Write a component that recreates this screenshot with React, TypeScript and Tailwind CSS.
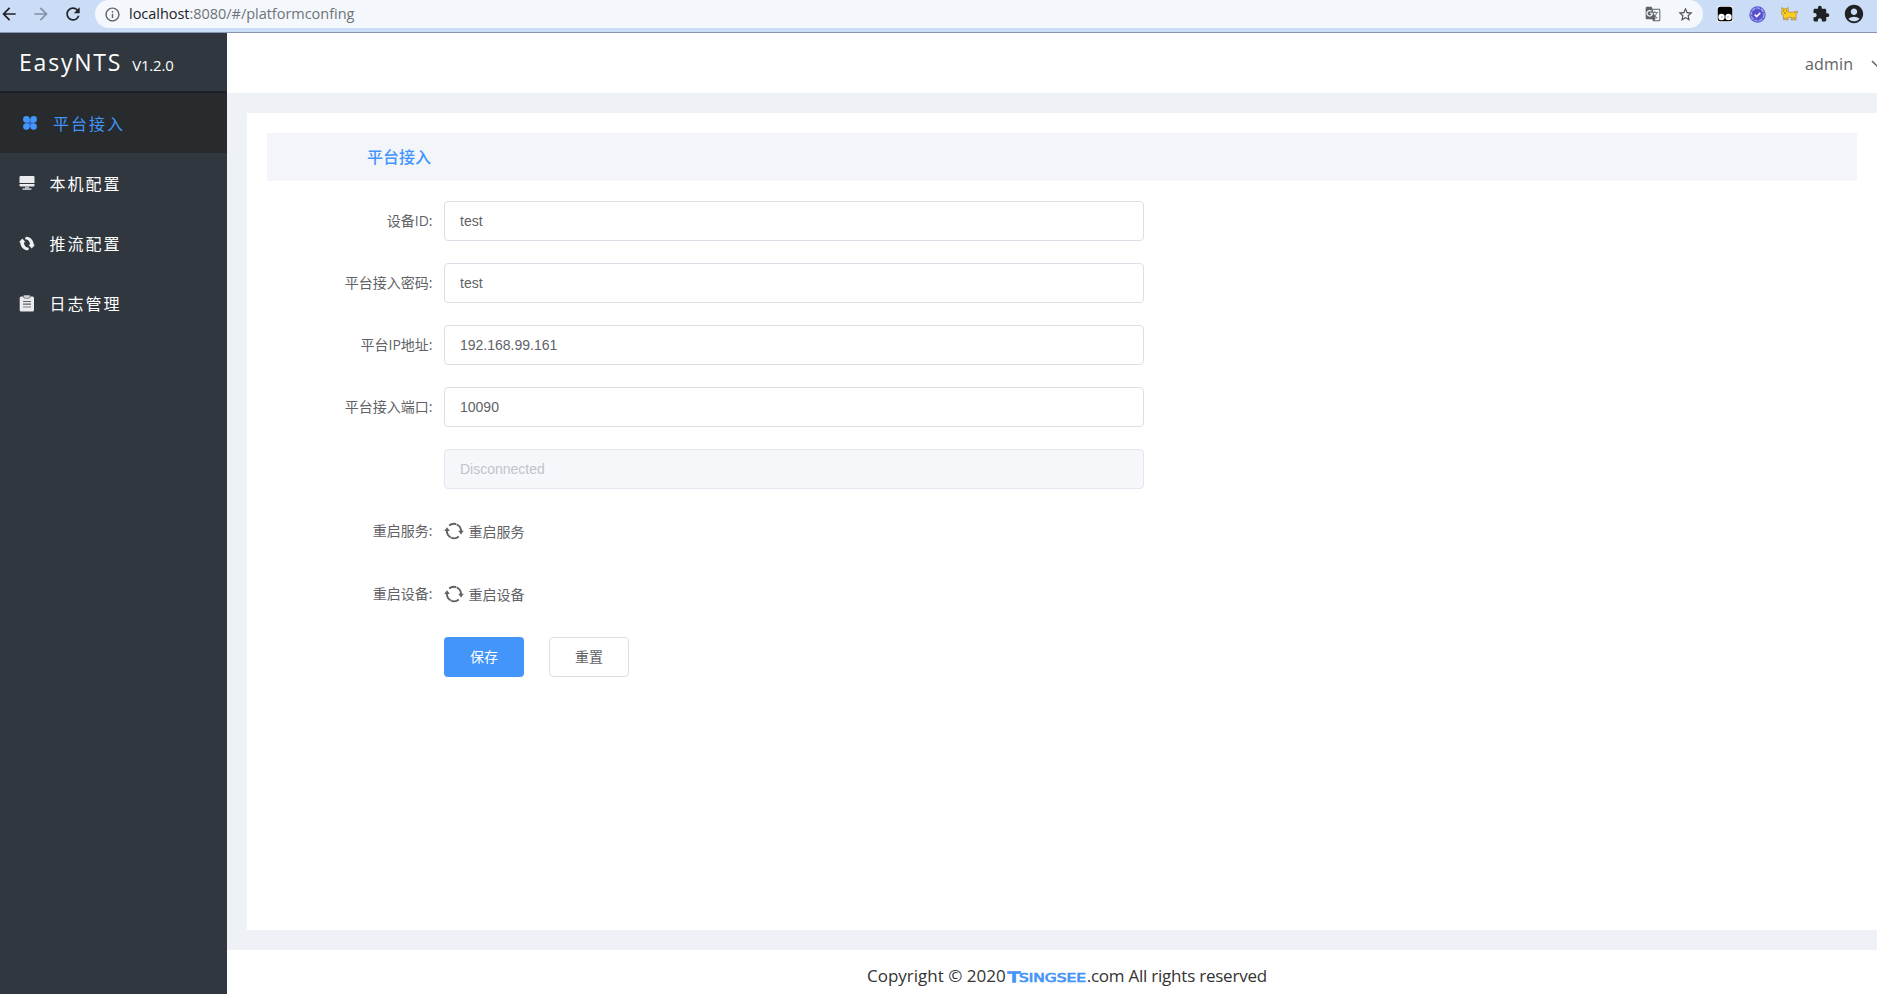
import type { ReactNode } from "react";
import { clsx } from "clsx";
import {
  MdAccountCircle,
  MdArrowBack,
  MdArrowForward,
  MdExtension,
  MdGTranslate,
  MdInfoOutline,
  MdRefresh,
  MdStarBorder,
} from "react-icons/md";

/* ---------- icons ---------- */

function CloverIcon() {
  return (
    <svg width="14" height="14" viewBox="0 0 14 14" fill="#4395f9">
      <rect x="3" y="3" width="8" height="8" fill="#2f66cf" />
      <circle cx="3.400" cy="3.400" r="3.300" />
      <circle cx="10.600" cy="3.400" r="3.300" />
      <circle cx="3.400" cy="10.600" r="3.300" />
      <circle cx="10.600" cy="10.600" r="3.300" />
    </svg>
  );
}

function MonitorIcon() {
  return (
    <svg width="16" height="14" viewBox="0 0 16 14" fill="#e9ebed">
      <path d="M1.500 0h13a1 1 0 0 1 1 1v6H.5V1a1 1 0 0 1 1-1z" />
      <path d="M.5 8h15v1.500a1 1 0 0 1-1 1h-13a1 1 0 0 1-1-1z" />
      <path d="M6 10.500h4v1.700h2.500V14h-9v-1.800H6z" fill="#b9bcc0" />
    </svg>
  );
}

function StreamIcon() {
  return (
    <svg width="16" height="15" viewBox="0 0 16 15" fill="#f0f1f2">
      <path d="M3.300 2.500 0 6.200h1.200C1.500 11 4.600 14.300 9.200 14.300l.9-2.600C7 11.700 5 9.500 5 6.200h1.600z" />
      <path d="M12.700 12.500 16 8.800h-1.200C14.500 4 11.400.7 6.800.7L5.900 3.300C9 3.300 11 5.500 11 8.800H9.400z" />
    </svg>
  );
}

function ClipboardIcon() {
  return (
    <svg width="16" height="17" viewBox="0 0 16 17">
      <rect x=".7" y="1.500" width="14.300" height="15" rx="1.500" fill="#e9ebed" />
      <rect x="4.700" y="0" width="6.300" height="3.200" rx=".8" fill="#d5d8db" stroke="#6b7075" strokeWidth=".8" />
      <path d="M4 6.500h8M4 9.200h8" stroke="#5c6166" strokeWidth="1.200" />
      <path d="M4 12h8" stroke="#8b8f94" strokeWidth="1.200" />
    </svg>
  );
}

function RestartIcon() {
  return (
    <svg width="20" height="18" viewBox="0 0 20 18" fill="none" stroke="#606266" strokeWidth="1.900">
      <path d="M5.200 3.500A7.200 7.200 0 0 1 17 9" />
      <path d="M3 8A7.200 7.200 0 0 0 14.800 14.500" />
      <path d="M.2 9 3 5.300 5.800 9z" fill="#606266" stroke="none" />
      <path d="M14.200 8.800 17 12.500l2.800-3.700z" fill="#606266" stroke="none" />
      <path d="m12.900 1 -.7 2.200M7.200 14.300l-.8 2.200" stroke="#fff" strokeWidth=".6" />
    </svg>
  );
}

function TampermonkeyIcon() {
  return (
    <svg width="16" height="16" viewBox="0 0 16 16">
      <rect width="16" height="16" rx="2.500" fill="#fff" />
      <rect x=".7" y=".7" width="14.600" height="14.600" rx="2.500" fill="#000" />
      <circle cx="4.500" cy="11" r="3.200" fill="#fff" />
      <circle cx="11.500" cy="11" r="3.200" fill="#fff" />
      <circle cx="5" cy="11" r="1" fill="#b7c7e8" />
      <circle cx="11" cy="11" r="1" fill="#b7c7e8" />
    </svg>
  );
}

function BadgeIcon() {
  return (
    <svg width="17" height="17" viewBox="0 0 17 17" fill="none">
      <circle cx="8.500" cy="8.500" r="8.200" fill="#5c5fd0" />
      <circle cx="8.500" cy="8.500" r="6.500" stroke="#a9acef" strokeWidth="1.200" strokeDasharray="3.500 1.300" />
      <circle cx="8.500" cy="8.500" r="5" fill="#5a50cf" />
      <path d="m5.700 8.600 2 2 3.600-3.800" stroke="#fff" strokeWidth="1.500" />
    </svg>
  );
}

function CatIcon() {
  return (
    <svg width="17" height="14" viewBox="0 0 17 14" fill="#fccd1d" stroke="#9a7430" strokeWidth=".6">
      <path d="M1 .5 2.800 1.800h2.400L7 .5l.3 4.700h4.500l2 .3V4.300h2.700v1.600H15V13h-1.700v-2.500H12V13h-1.700v-2.700H7V13H5.300v-2H4v1.500H2.400V8.500L.7 7.200z" />
      <path d="M2.200 3.800h1M5 3.800h1M3.300 6h1.600" stroke="#5c4420" strokeWidth=".9" />
    </svg>
  );
}

/* ---------- browser toolbar ---------- */

function BrowserBar() {
  return (
    <div className="flex h-[33px] shrink-0 border-b border-[#8797b3] bg-[#cbdcf6] text-[#202124]">
      <div className="flex h-7 w-[95px] shrink-0 items-center gap-3">
        <MdArrowBack size={20} className="-ml-px shrink-0" />
        <MdArrowForward size={20} className="shrink-0 text-[#8490a5]" />
        <MdRefresh size={20} className="shrink-0" />
      </div>
      <div className="flex h-7 w-[1608px] shrink-0 items-center rounded-full bg-[#f4f8fd] pr-[9px] pl-[9px]">
        <MdInfoOutline size={17} className="text-[#5f6368]" />
        <span className="ml-2 text-[14.500px] tracking-[-0.030px] text-[#6f7377]">
          <span className="text-[#202124]">localhost</span>:8080/#/platformconfing
        </span>
        <MdGTranslate size={16} className="ml-auto text-[#5f6368]" />
        <MdStarBorder size={17} className="ml-4 text-[#4b4f54]" />
      </div>
      <div className="ml-[14px] flex h-7 shrink-0 items-center">
        <TampermonkeyIcon />
        <span className="ml-[15.500px]"><BadgeIcon /></span>
        <span className="ml-[15px]"><CatIcon /></span>
        <MdExtension size={18} className="ml-[14px]" />
        <MdAccountCircle size={22} className="ml-[13px]" />
      </div>
    </div>
  );
}

/* ---------- sidebar ---------- */

const MENU: { label: string; icon: ReactNode; active?: boolean }[] = [
  { label: "平台接入", icon: <CloverIcon />, active: true },
  { label: "本机配置", icon: <MonitorIcon /> },
  { label: "推流配置", icon: <StreamIcon /> },
  { label: "日志管理", icon: <ClipboardIcon /> },
];

function Sidebar() {
  return (
    <aside className="w-[227px] shrink-0 bg-[#30373e] text-white">
      <div className="flex h-[60px] items-baseline border-b-2 border-[#1b202a] pt-[11px] pl-[19px] leading-9">
        <span className="text-[23px] tracking-[1.800px]">EasyNTS</span>
        <span className="ml-[10px] text-[15px] tracking-[-0.200px]">V1.2.0</span>
      </div>
      <nav>
        {MENU.map((item) => (
          <div
            key={item.label}
            className={clsx(
              "flex h-[60px] items-center text-[16px] tracking-[2px]",
              item.active ? "bg-[#272b2e] pl-[23px] text-[#4395f9]" : "pl-[19px] text-white",
            )}
          >
            <span className="flex w-4 shrink-0">{item.icon}</span>
            <span className={item.active ? "ml-[14px] pt-px" : "ml-[14.500px] pt-px"}>{item.label}</span>
          </div>
        ))}
      </nav>
    </aside>
  );
}

/* ---------- form ---------- */

const FIELDS = [
  { label: "设备ID:", value: "test" },
  { label: "平台接入密码:", value: "test" },
  { label: "平台IP地址:", value: "192.168.99.161" },
  { label: "平台接入端口:", value: "10090" },
  { label: "", value: "Disconnected", disabled: true },
];

function Row({ label, children }: { label: string; children: ReactNode }) {
  return (
    <div className="flex h-10 items-center">
      <div className="w-[177px] shrink-0 pr-[11.500px] text-right text-sm">{label}</div>
      {children}
    </div>
  );
}

function PlatformForm() {
  return (
    <div className="pt-5 text-[#606266]">
      <div className="flex flex-col gap-[22px]">
        {FIELDS.map((field, i) => (
          <Row key={i} label={field.label}>
            <input
              readOnly
              disabled={field.disabled}
              value={field.value}
              className={clsx(
                "h-10 w-[700px] rounded border px-[15px] font-['Liberation_Sans',sans-serif] text-sm outline-none",
                field.disabled
                  ? "border-[#e4e7ed] bg-[#f5f7fa] text-[#c0c4cc]"
                  : "border-[#dcdfe6] bg-white text-[#606266]",
              )}
            />
          </Row>
        ))}
      </div>
      <div className="mt-[22px] flex flex-col gap-[23px]">
        {["重启服务", "重启设备"].map((text) => (
          <Row key={text} label={`${text}:`}>
            <RestartIcon />
            <span className="ml-[4.500px] pt-px text-sm">{text}</span>
          </Row>
        ))}
        <Row label="">
          <button className="h-10 w-20 rounded bg-[#4395f9] text-sm text-white">保存</button>
          <button className="ml-[25px] h-10 w-20 rounded border border-[#dcdfe6] bg-white text-sm">重置</button>
        </Row>
      </div>
    </div>
  );
}

function Footer() {
  return (
    <footer className="flex h-[44px] shrink-0 items-center bg-white pt-[7px] pl-[640px] text-[17px] text-[#333] whitespace-pre">
      <span>Copyright © 2020</span>
      <svg
        width="79"
        height="12"
        viewBox="0 0 79 12"
        className="ml-[2px] shrink-0 overflow-visible"
        fill="#4395f9"
        stroke="#4395f9"
        strokeWidth=".7"
        fontFamily="DejaVu Sans"
      >
        <text x="0" y="11.500" fontSize="14.500" strokeWidth="1.300" textLength="12" lengthAdjust="spacingAndGlyphs">T</text>
        <text x="11" y="11.500" fontSize="11.500" textLength="67" lengthAdjust="spacingAndGlyphs">SINGSEE</text>
      </svg>
      <span className="tracking-[-0.230px]">.com All rights reserved</span>
    </footer>
  );
}

export default function App() {
  return (
    <div className="flex h-[994px] w-[1877px] flex-col overflow-hidden bg-white font-['Open_Sans','Noto_Sans_CJK_SC',sans-serif]">
      <BrowserBar />
      <div className="flex min-h-0 flex-1">
        <Sidebar />
        <div className="flex min-w-0 flex-1 flex-col bg-[#eef1f6]">
          <header className="flex h-[60px] shrink-0 items-center bg-white pt-px pl-[1578px] text-[16px] tracking-[0.200px] text-[#606266]">
            admin
            <svg width="12" height="8" viewBox="0 0 12 8" className="ml-[18px] shrink-0" fill="none" stroke="#606266" strokeWidth="1.500">
              <path d="m1 1 5 5 5-5" />
            </svg>
          </header>
          <main className="mt-5 mb-5 ml-5 min-h-0 flex-1 bg-white p-5">
            <h1 className="flex h-12 items-center bg-[#f3f5fa] pl-[100px] text-[16px] font-medium text-[#4395f9]">
              平台接入
            </h1>
            <PlatformForm />
          </main>
          <Footer />
        </div>
      </div>
    </div>
  );
}
